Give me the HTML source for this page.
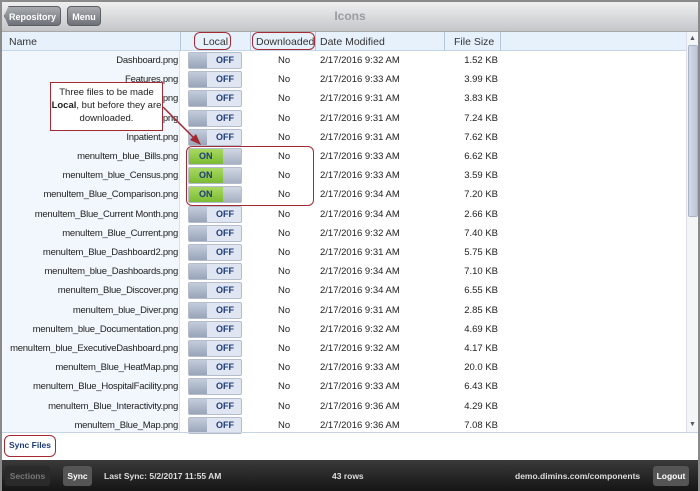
<!DOCTYPE html>
<html><head><meta charset="utf-8"><style>
*{margin:0;padding:0;box-sizing:border-box}
body{width:700px;height:491px;overflow:hidden;font-family:"Liberation Sans",sans-serif;background:#fff;position:relative}
.frame{position:absolute;left:0;top:0;width:700px;height:491px;border:2px solid #8a8a8a;border-bottom:none}
.top{position:absolute;left:0;top:0;width:700px;height:32px;background:linear-gradient(#f2f2f2,#c4c6ca);border-bottom:1px solid #a8a8a8}
.btn{position:absolute;top:6px;height:20px;border-radius:4px;background:linear-gradient(#a8abb0,#6e7278);color:#fff;font-size:9px;font-weight:bold;line-height:20px;text-align:center;border:1px solid #5c5f64}
.title{position:absolute;left:0;width:700px;top:9px;text-align:center;font-size:12px;font-weight:bold;color:#9a9ca0}
.hdr{position:absolute;left:2px;top:32px;width:684px;height:19px;background:#e7f1fc;border-bottom:1px solid #c5d6e8;font-size:10.5px;color:#333}
.hdr span{position:absolute;top:4px}
.sep{position:absolute;top:0;width:1px;height:19px;background:#b8c8dc}
.namecol{position:absolute;left:2px;top:51px;width:178px;height:381px;background:#f1f7fd;border-right:1px solid #d6e2ee}
.row{position:absolute;left:0;width:686px;height:19px;font-size:9.5px;color:#222}
.row .n{position:absolute;right:508px;top:4px;white-space:nowrap;letter-spacing:-0.25px}
.row .d{position:absolute;left:278px;top:4px}
.row .dt{position:absolute;left:320px;top:4px}
.row .s{position:absolute;right:188px;top:4px}
.tg{position:absolute;left:188px;top:1px;width:54px;height:17px;border:1px solid #b5bccb;border-radius:2px;background:#dfe6f2;font-size:9px;font-weight:bold;color:#1d3a78}
.tg .k{position:absolute;top:0;width:18px;height:15px;background:linear-gradient(#c3ccdb,#98a4b8)}
.off .k{left:0}.off b{position:absolute;left:27px;top:2px}
.on{background:linear-gradient(#a8d860,#7cbb33)}.on .k{right:0;background:linear-gradient(#d0d7e3,#a6b0c2)}.on b{position:absolute;left:10px;top:2px}
.sb{position:absolute;left:686px;top:32px;width:12px;height:400px;background:#f4f5f7;border-left:1px solid #dde}
.thumb{position:absolute;left:1px;top:13px;width:10px;height:172px;background:linear-gradient(90deg,#d4dbe8,#bcc6d8);border:1px solid #aab4c8;border-radius:2px}
.red{position:absolute;border:1.5px solid #a32a32;border-radius:6px}
.foot{position:absolute;left:0;top:460px;width:700px;height:31px;background:linear-gradient(#3a3a3a,#151515);font-size:8.5px;font-weight:bold;color:#ddd}
.fb{position:absolute;top:6px;height:20px;border-radius:3px;line-height:20px;text-align:center}
</style></head><body>
<div class="top"></div>
<div class="btn" style="left:4px;width:57px;clip-path:polygon(8% 0,100% 0,100% 100%,8% 100%,0 50%)">Repository</div>
<div class="btn" style="left:67px;width:34px">Menu</div>
<div class="title">Icons</div>
<div class="namecol"></div>
<div class="hdr">
<span style="left:7px">Name</span>
<div class="sep" style="left:178px"></div>
<span style="left:201px">Local</span>
<div class="sep" style="left:248px"></div>
<span style="left:254px">Downloaded</span>
<div class="sep" style="left:313px"></div>
<span style="left:318px">Date Modified</span>
<div class="sep" style="left:442px"></div>
<span style="left:452px">File Size</span>
<div class="sep" style="left:498px"></div>
</div>
<div id="rows"></div>
<div style="position:absolute;left:0;top:432px;width:700px;height:1px;background:#c8d4e2"></div>
<div class="sb"><div style="position:absolute;left:2px;top:3px;font-size:7px;color:#556">▲</div><div class="thumb"></div><div style="position:absolute;left:2px;top:389px;font-size:7px;color:#556">▼</div></div>
<div class="red" style="left:194px;top:32px;width:37px;height:18px"></div>
<div class="red" style="left:252px;top:32px;width:63px;height:18px"></div>
<div class="red" style="left:186px;top:146px;width:128px;height:60px"></div>
<div style="position:absolute;left:50px;top:82px;width:113px;height:49px;background:#fff;border:1.5px solid #a32a32;font-size:9.5px;line-height:13px;text-align:center;padding-top:3px;color:#222">Three files to be made <b>Local</b>, but before they are downloaded.</div>
<svg style="position:absolute;left:0;top:0" width="700" height="491"><line x1="163" y1="107" x2="197" y2="141" stroke="#a32a32" stroke-width="1.5"/><polygon points="201,145 190,140 196,134" fill="#a32a32"/></svg>
<div style="position:absolute;left:4px;top:435px;width:52px;height:22px;border:1.5px solid #a32a32;border-radius:6px;background:#fff;font-size:8.5px;font-weight:bold;color:#1d3a78;text-align:center;line-height:19px">Sync Files</div>
<div class="foot">
<div class="fb" style="left:5px;width:45px;background:#2a2a2a;color:#777">Sections</div>
<div class="fb" style="left:63px;width:29px;background:#555;color:#fff">Sync</div>
<div style="position:absolute;left:104px;top:11px">Last Sync: 5/2/2017 11:55 AM</div>
<div style="position:absolute;left:332px;top:11px">43 rows</div>
<div style="position:absolute;left:515px;top:11px">demo.dimins.com/components</div>
<div class="fb" style="left:653px;width:36px;background:#555;color:#fff">Logout</div>
</div>
<div class="frame"></div>
<script>
var d=[["Dashboard.png",0,"2/17/2016 9:32 AM","1.52 KB"],["Features.png",0,"2/17/2016 9:33 AM","3.99 KB"],["Forms.png",0,"2/17/2016 9:31 AM","3.83 KB"],["Help.png",0,"2/17/2016 9:31 AM","7.24 KB"],["Inpatient.png",0,"2/17/2016 9:31 AM","7.62 KB"],["menuItem_blue_Bills.png",1,"2/17/2016 9:33 AM","6.62 KB"],["menuItem_blue_Census.png",1,"2/17/2016 9:33 AM","3.59 KB"],["menuItem_Blue_Comparison.png",1,"2/17/2016 9:34 AM","7.20 KB"],["menuItem_Blue_Current Month.png",0,"2/17/2016 9:34 AM","2.66 KB"],["menuItem_Blue_Current.png",0,"2/17/2016 9:32 AM","7.40 KB"],["menuItem_Blue_Dashboard2.png",0,"2/17/2016 9:31 AM","5.75 KB"],["menuItem_blue_Dashboards.png",0,"2/17/2016 9:34 AM","7.10 KB"],["menuItem_Blue_Discover.png",0,"2/17/2016 9:34 AM","6.55 KB"],["menuItem_blue_Diver.png",0,"2/17/2016 9:31 AM","2.85 KB"],["menuItem_blue_Documentation.png",0,"2/17/2016 9:32 AM","4.69 KB"],["menuItem_blue_ExecutiveDashboard.png",0,"2/17/2016 9:32 AM","4.17 KB"],["menuItem_Blue_HeatMap.png",0,"2/17/2016 9:33 AM","20.0 KB"],["menuItem_Blue_HospitalFacility.png",0,"2/17/2016 9:33 AM","6.43 KB"],["menuItem_Blue_Interactivity.png",0,"2/17/2016 9:36 AM","4.29 KB"],["menuItem_Blue_Map.png",0,"2/17/2016 9:36 AM","7.08 KB"]];
var h="";d.forEach(function(r,i){var t=51+i*19.2;h+='<div class="row" style="top:'+t+'px"><span class="n">'+r[0]+'</span>'+(r[1]?'<div class="tg on"><div class="k"></div><b>ON</b></div>':'<div class="tg off"><div class="k"></div><b>OFF</b></div>')+'<span class="d">No</span><span class="dt">'+r[2]+'</span><span class="s">'+r[3]+'</span></div>';});
document.getElementById("rows").innerHTML=h;
</script>
</body></html>
